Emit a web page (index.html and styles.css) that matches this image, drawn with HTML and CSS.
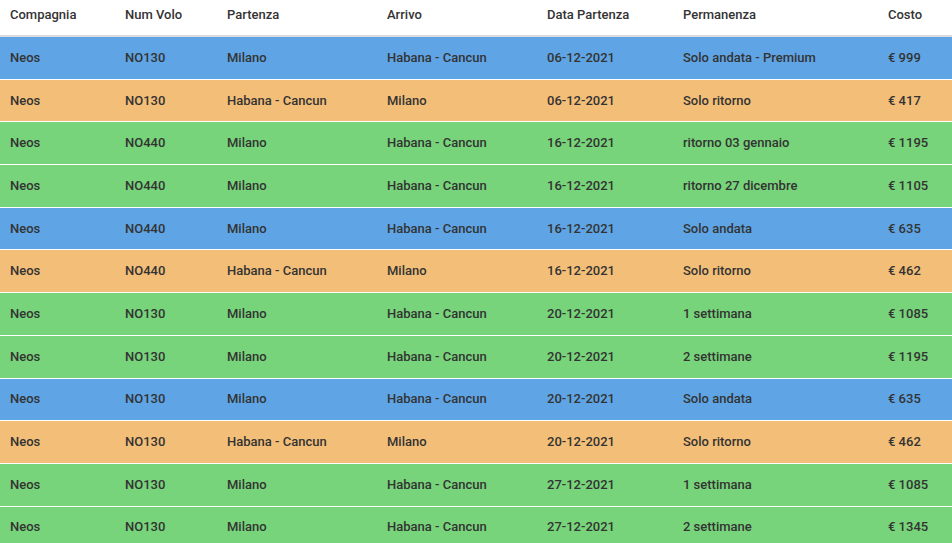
FILE: index.html
```html
<!DOCTYPE html>
<html lang="it">
<head>
<meta charset="utf-8">
<title>Voli</title>
<link rel="stylesheet" href="styles.css">
</head>
<body>
<table class="flights">
  <colgroup>
    <col class="c1"><col class="c2"><col class="c3"><col class="c4"><col class="c5"><col class="c6"><col class="c7">
  </colgroup>
  <thead>
    <tr><th>Compagnia</th><th>Num Volo</th><th>Partenza</th><th>Arrivo</th><th>Data Partenza</th><th>Permanenza</th><th>Costo</th></tr>
  </thead>
  <tbody>
    <tr class="blue"><td>Neos</td><td>NO130</td><td>Milano</td><td>Habana - Cancun</td><td>06-12-2021</td><td>Solo andata - Premium</td><td>€ 999</td></tr>
    <tr class="orange"><td>Neos</td><td>NO130</td><td>Habana - Cancun</td><td>Milano</td><td>06-12-2021</td><td>Solo ritorno</td><td>€ 417</td></tr>
    <tr class="green"><td>Neos</td><td>NO440</td><td>Milano</td><td>Habana - Cancun</td><td>16-12-2021</td><td>ritorno 03 gennaio</td><td>€ 1195</td></tr>
    <tr class="green"><td>Neos</td><td>NO440</td><td>Milano</td><td>Habana - Cancun</td><td>16-12-2021</td><td>ritorno 27 dicembre</td><td>€ 1105</td></tr>
    <tr class="blue"><td>Neos</td><td>NO440</td><td>Milano</td><td>Habana - Cancun</td><td>16-12-2021</td><td>Solo andata</td><td>€ 635</td></tr>
    <tr class="orange"><td>Neos</td><td>NO440</td><td>Habana - Cancun</td><td>Milano</td><td>16-12-2021</td><td>Solo ritorno</td><td>€ 462</td></tr>
    <tr class="green"><td>Neos</td><td>NO130</td><td>Milano</td><td>Habana - Cancun</td><td>20-12-2021</td><td>1 settimana</td><td>€ 1085</td></tr>
    <tr class="green"><td>Neos</td><td>NO130</td><td>Milano</td><td>Habana - Cancun</td><td>20-12-2021</td><td>2 settimane</td><td>€ 1195</td></tr>
    <tr class="blue"><td>Neos</td><td>NO130</td><td>Milano</td><td>Habana - Cancun</td><td>20-12-2021</td><td>Solo andata</td><td>€ 635</td></tr>
    <tr class="orange"><td>Neos</td><td>NO130</td><td>Habana - Cancun</td><td>Milano</td><td>20-12-2021</td><td>Solo ritorno</td><td>€ 462</td></tr>
    <tr class="green"><td>Neos</td><td>NO130</td><td>Milano</td><td>Habana - Cancun</td><td>27-12-2021</td><td>1 settimana</td><td>€ 1085</td></tr>
    <tr class="green"><td>Neos</td><td>NO130</td><td>Milano</td><td>Habana - Cancun</td><td>27-12-2021</td><td>2 settimane</td><td>€ 1345</td></tr>
  </tbody>
</table>
</body>
</html>
```
FILE: styles.css
```css
html, body {
  margin: 0;
  padding: 0;
  background: #fff;
}
body {
  font-family: Roboto, "Liberation Sans", sans-serif;
  font-size: 13px;
  font-weight: 500;
  color: #333;
  overflow: hidden;
}
.flights {
  width: 952px;
  border-collapse: collapse;
  table-layout: fixed;
}
.c1 { width: 115px; }
.c2 { width: 102px; }
.c3 { width: 160px; }
.c4 { width: 160px; }
.c5 { width: 136px; }
.c6 { width: 205px; }
.c7 { width: 74px; }
.flights th {
  text-align: left;
  font-weight: 500;
  padding: 0 10px;
  height: 36px;
  box-sizing: border-box;
  vertical-align: top;
  padding-top: 7px;
  line-height: 16px;
  border-bottom: 2px solid #dcdde1;
}
.flights td {
  padding: 0 10px;
  height: 41.7px;
  line-height: 16px;
  vertical-align: middle;
  border-top: 1px solid #fff;
}
.flights tbody tr:first-child td { border-top: 0; }
.blue td { background: #5fa5e5; }
.orange td { background: #f3bf78; }
.green td { background: #77d47a; }
```
